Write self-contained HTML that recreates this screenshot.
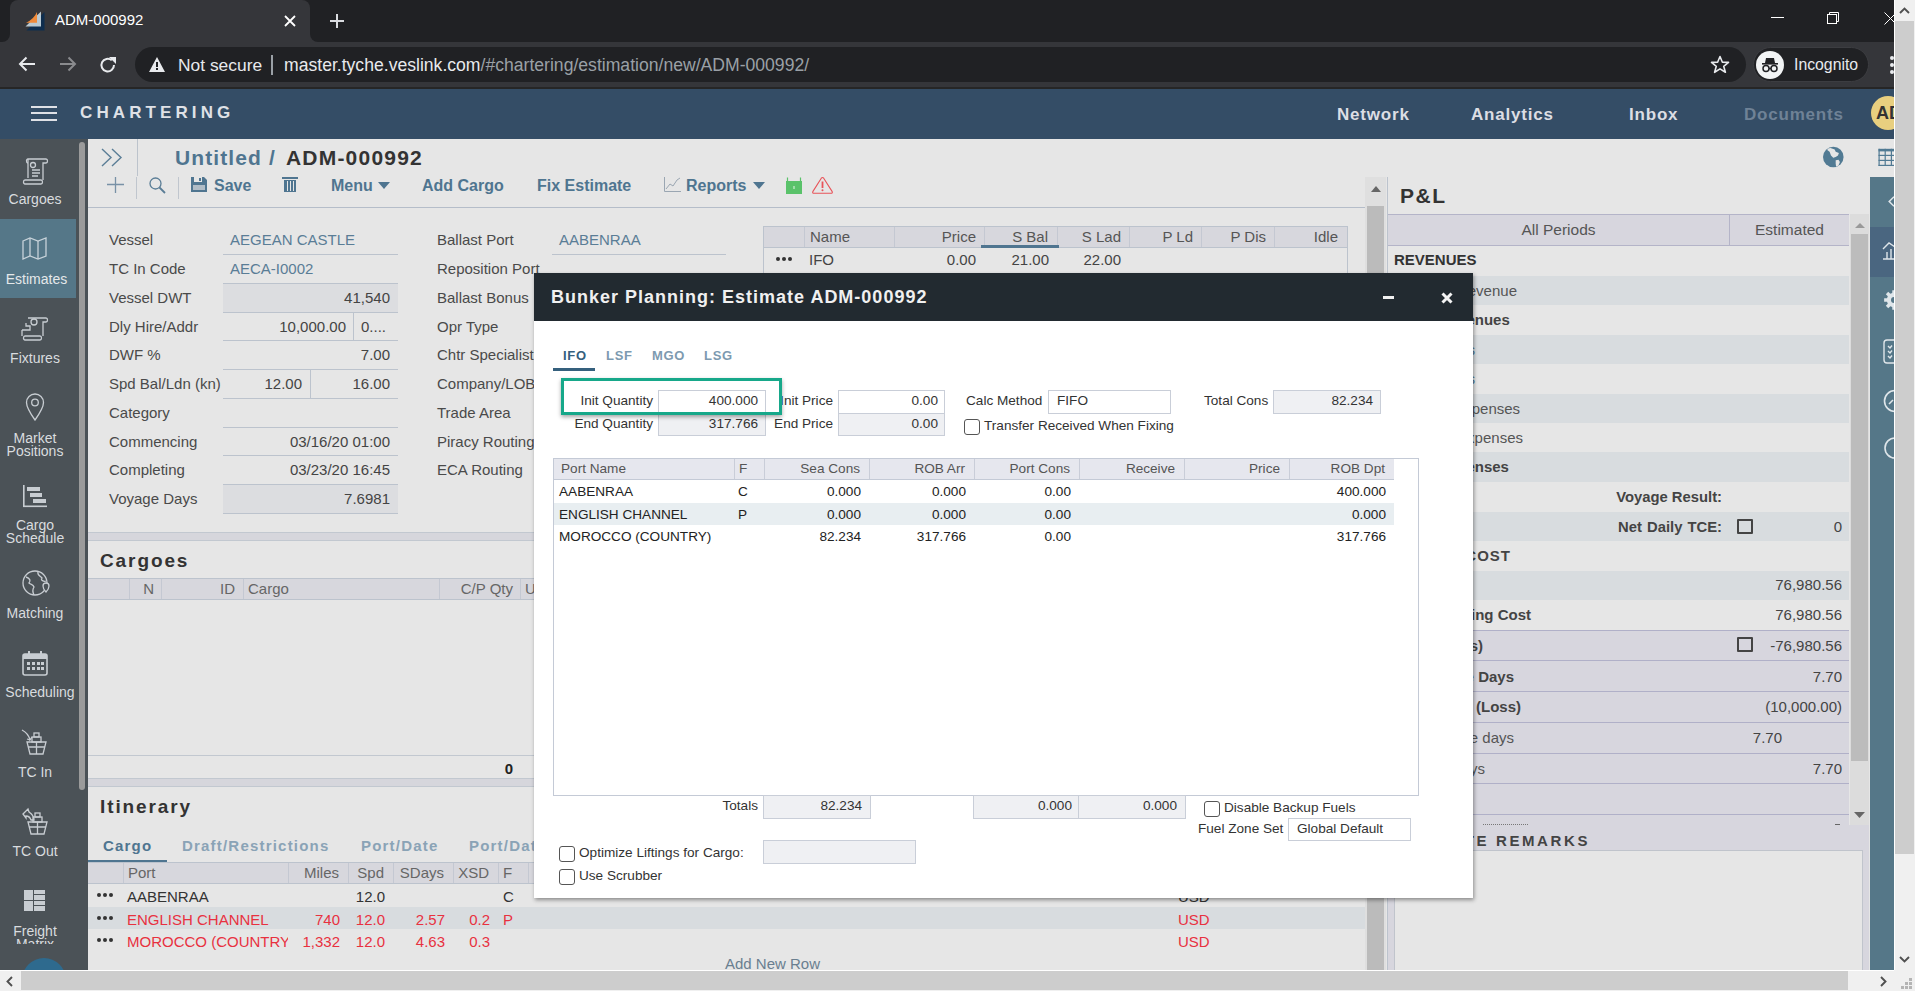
<!DOCTYPE html>
<html><head><meta charset="utf-8"><title>ADM-000992</title>
<style>
*{box-sizing:border-box;margin:0;padding:0}
html,body{width:1915px;height:991px;overflow:hidden}
body{position:relative;background:#e6e6e6;font-family:"Liberation Sans",sans-serif;font-size:15px;color:#444}
.a{position:absolute}
.t{position:absolute;white-space:nowrap;line-height:20px}
.r{text-align:right}
.c{text-align:center}
.b{font-weight:bold}
svg{position:absolute;overflow:visible}
</style></head><body>
<!-- tab strip -->
<div class="a" style="left:0;top:0;width:1894px;height:42px;background:#202124"></div>
<div class="a" style="left:10px;top:0;width:300px;height:42px;background:#35363a;border-radius:8px 8px 0 0"></div>
<div class="a" style="left:2px;top:34px;width:8px;height:8px;background:#35363a"></div>
<div class="a" style="left:0;top:26px;width:10px;height:16px;background:#202124;border-radius:0 0 8px 0"></div>
<div class="a" style="left:310px;top:34px;width:8px;height:8px;background:#35363a"></div>
<div class="a" style="left:310px;top:26px;width:10px;height:16px;background:#202124;border-radius:0 0 0 8px"></div>
<svg style="left:0;top:0" width="50" height="40" viewBox="0 0 50 40">
 <polygon points="44.5,12 44.5,30.5 26.5,30.5" fill="#0f2e4e"/>
 <polygon points="41,11.5 41,26.5 25.5,26.5" fill="#b9c9d2"/>
 <path d="M37,12 Q34,19 26,22.8 L37,22.8 Z" fill="#f08a3a"/>
</svg>
<div class="t" style="left:55px;top:10px;font-size:15px;color:#fff;line-height:20px">ADM-000992</div>
<svg style="left:284px;top:15px" width="12" height="12" viewBox="0 0 12 12"><path d="M1 1L11 11M11 1L1 11" stroke="#fff" stroke-width="1.8"/></svg>
<svg style="left:329px;top:13px" width="16" height="16" viewBox="0 0 16 16"><path d="M8 1V15M1 8H15" stroke="#dadce0" stroke-width="2"/></svg>
<!-- window controls -->
<div class="a" style="left:1771px;top:17px;width:13px;height:1px;background:#fff"></div>
<svg style="left:1826px;top:11px" width="14" height="14" viewBox="0 0 14 14"><path d="M3.5 3.5V1.5H12.5V10.5H10.5" fill="none" stroke="#fff" stroke-width="1"/><rect x="1.5" y="3.5" width="9" height="9" fill="none" stroke="#fff" stroke-width="1"/></svg>
<svg style="left:1884px;top:12px" width="13" height="13" viewBox="0 0 13 13"><path d="M0.5 0.5L12.5 12.5M12.5 0.5L0.5 12.5" stroke="#fff" stroke-width="1"/></svg>
<!-- toolbar -->
<div class="a" style="left:0;top:42px;width:1894px;height:46px;background:#35363a"></div>
<div class="a" style="left:0;top:87px;width:1894px;height:2px;background:#262626"></div>
<svg style="left:18px;top:56px" width="18" height="16" viewBox="0 0 18 16"><path d="M17 8H2M8.5 1.5L2 8L8.5 14.5" fill="none" stroke="#e8eaed" stroke-width="2"/></svg>
<svg style="left:59px;top:56px" width="18" height="16" viewBox="0 0 18 16"><path d="M1 8H16M9.5 1.5L16 8L9.5 14.5" fill="none" stroke="#8a8b8e" stroke-width="2"/></svg>
<svg style="left:99px;top:56px" width="18" height="18" viewBox="0 0 18 18"><path d="M15 9A6.3 6.3 0 1 1 12.8 4.3" fill="none" stroke="#e8eaed" stroke-width="2"/><polygon points="10,1 17,1 17,8" fill="#e8eaed"/></svg>
<div class="a" style="left:135px;top:47px;width:1611px;height:35px;background:#202124;border-radius:17.5px"></div>
<svg style="left:149px;top:57px" width="16" height="15" viewBox="0 0 16 15"><polygon points="8,0 16,15 0,15" fill="#e8eaed"/><rect x="7" y="5" width="2" height="5" fill="#202124"/><rect x="7" y="11" width="2" height="2" fill="#202124"/></svg>
<div class="t" style="left:178px;top:54px;font-size:17.4px;color:#e8eaed;line-height:22px">Not secure</div>
<div class="a" style="left:271px;top:55px;width:2px;height:20px;background:#9aa0a6"></div>
<div class="t" style="left:284px;top:54px;font-size:17.6px;color:#e8eaed;line-height:22px">master.tyche.veslink.com<span style="color:#9aa0a6">/#chartering/estimation/new/ADM-000992/</span></div>
<svg style="left:1710px;top:55px" width="20" height="19" viewBox="0 0 20 19"><polygon points="10,1.5 12.4,7.2 18.5,7.4 13.7,11.3 15.4,17.3 10,13.9 4.6,17.3 6.3,11.3 1.5,7.4 7.6,7.2" fill="none" stroke="#e8eaed" stroke-width="1.6" stroke-linejoin="round"/></svg>
<div class="a" style="left:1753px;top:47px;width:116px;height:35px;background:#202124;border-radius:17.5px;border:1px solid #3c3d41"></div>
<div class="a" style="left:1756px;top:51px;width:28px;height:28px;background:#f1f3f4;border-radius:50%"></div>
<svg style="left:1760px;top:56px" width="20" height="18" viewBox="0 0 20 18"><path d="M6 2L14 2L15 7H5Z" fill="#202124"/><rect x="2" y="7" width="16" height="1.6" fill="#202124"/><circle cx="6" cy="12.5" r="3" fill="none" stroke="#202124" stroke-width="1.5"/><circle cx="14" cy="12.5" r="3" fill="none" stroke="#202124" stroke-width="1.5"/><path d="M9 12.5H11" stroke="#202124" stroke-width="1.5"/></svg>
<div class="t" style="left:1794px;top:54px;font-size:15.8px;color:#e8eaed;line-height:22px">Incognito</div>
<div class="a" style="left:1890px;top:56px;width:4px;height:4px;background:#e8eaed;border-radius:50%"></div>
<div class="a" style="left:1890px;top:63px;width:4px;height:4px;background:#e8eaed;border-radius:50%"></div>
<div class="a" style="left:1890px;top:70px;width:4px;height:4px;background:#e8eaed;border-radius:50%"></div>
<!-- app header -->
<div class="a" style="left:0;top:89px;width:1894px;height:50px;background:#344d66"></div>
<div class="a" style="left:31px;top:106px;width:26px;height:2px;background:#dfe1e6"></div>
<div class="a" style="left:31px;top:112px;width:26px;height:2px;background:#dfe1e6"></div>
<div class="a" style="left:31px;top:119px;width:26px;height:2px;background:#dfe1e6"></div>
<div class="t b" style="left:80px;top:103px;font-size:17px;letter-spacing:4.1px;color:#dfe1e6;line-height:20px">CHARTERING</div>
<div class="t b" style="left:1337px;top:105px;font-size:17px;letter-spacing:0.8px;color:#dcdee4;line-height:20px">Network</div>
<div class="t b" style="left:1471px;top:105px;font-size:17px;letter-spacing:0.8px;color:#dcdee4;line-height:20px">Analytics</div>
<div class="t b" style="left:1629px;top:105px;font-size:17px;letter-spacing:0.8px;color:#dcdee4;line-height:20px">Inbox</div>
<div class="t b" style="left:1744px;top:105px;font-size:17px;letter-spacing:0.8px;color:#6f8296;line-height:20px">Documents</div>
<div class="a" style="left:1871px;top:96px;width:34px;height:34px;background:#e8cf7f;border-radius:50%;overflow:hidden"><div class="t b" style="left:5px;top:7px;font-size:18px;color:#333;line-height:20px">AD</div></div>
<!-- left sidebar -->
<div class="a" style="left:0;top:139px;width:79px;height:831px;background:#4b5257"></div>
<div class="a" style="left:79px;top:139px;width:9px;height:831px;background:#4b5257"></div>
<div class="a" style="left:79px;top:142px;width:6px;height:648px;background:#9b9b9b;border-radius:3px"></div>
<div class="a" style="left:0;top:219px;width:76px;height:79px;background:#557788"></div>
<!-- Cargoes icon: scroll -->
<svg style="left:22px;top:156px" width="28" height="30" viewBox="0 0 28 30" fill="none" stroke="#c8cdd2" stroke-width="1.3">
 <path d="M6 3H24C26 3 26 7 24 7H21V24"/><path d="M6 3V22"/><path d="M6 3C4 3 4 7 6 7"/>
 <path d="M3 24H19C21 24 21 28 19 28H3C1 28 1 24 3 24Z"/><circle cx="11" cy="9" r="2.5"/><path d="M10 14H18M10 17H18M10 20H16"/>
</svg>
<div class="t c" style="left:0;top:189px;width:70px;font-size:14px;color:#d9dcdf">Cargoes</div>
<!-- Estimates icon: map -->
<svg style="left:22px;top:237px" width="26" height="24" viewBox="0 0 26 24" fill="none" stroke="#c8d3da" stroke-width="1.3">
 <path d="M1 4L8 1L16 4L24 1V19L16 22L8 19L1 22Z"/><path d="M8 1V19M16 4V22"/>
</svg>
<div class="t c" style="left:0;top:269px;width:73px;font-size:14px;color:#e4e8ea">Estimates</div>
<!-- Fixtures icon -->
<svg style="left:20px;top:314px" width="30" height="30" viewBox="0 0 30 30" fill="none" stroke="#c8cdd2" stroke-width="1.3">
 <path d="M8 4H26C28 4 28 8 26 8H23V22"/><circle cx="14" cy="8" r="3"/><path d="M2 16H10V12H6V9"/><path d="M5 22H20C22 22 22 26 20 26H5C3 26 3 22 5 22Z"/><path d="M2 16V22"/>
</svg>
<div class="t c" style="left:0;top:348px;width:70px;font-size:14px;color:#d9dcdf">Fixtures</div>
<!-- Market positions: pin -->
<svg style="left:25px;top:393px" width="20" height="28" viewBox="0 0 20 28" fill="none" stroke="#c8cdd2" stroke-width="1.3">
 <path d="M10 27C10 27 1.5 15 1.5 9.5A8.5 8.5 0 0 1 18.5 9.5C18.5 15 10 27 10 27Z"/><circle cx="10" cy="9.5" r="3.3"/>
</svg>
<div class="t c" style="left:0;top:432px;width:70px;font-size:14px;color:#d9dcdf;line-height:13px">Market<br>Positions</div>
<!-- Cargo schedule -->
<svg style="left:22px;top:484px" width="26" height="24" viewBox="0 0 26 24">
 <rect x="1" y="1" width="1.6" height="22" fill="#c8cdd2"/><rect x="1" y="21.5" width="24" height="1.6" fill="#c8cdd2"/>
 <rect x="5" y="3" width="13" height="4" fill="#c8cdd2"/><rect x="8" y="9" width="12" height="4" fill="#c8cdd2"/><rect x="11" y="15" width="13" height="4" fill="#c8cdd2"/>
</svg>
<div class="t c" style="left:0;top:519px;width:70px;font-size:14px;color:#d9dcdf;line-height:13px">Cargo<br>Schedule</div>
<!-- Matching globe -->
<svg style="left:22px;top:570px" width="28" height="28" viewBox="0 0 28 28" fill="none" stroke="#c8cdd2" stroke-width="1.3">
 <circle cx="13" cy="13" r="12"/><path d="M4 7C8 8 9 11 7 13C9 15 11 14 12 17C10 20 11 23 12 25"/><path d="M16 2C15 5 18 6 20 8C18 10 22 12 24 11"/><path d="M21 16A3 3 0 0 1 27 16C27 19 24 22 24 22C24 22 21 19 21 16Z" fill="#4b5257"/>
</svg>
<div class="t c" style="left:0;top:603px;width:70px;font-size:14px;color:#d9dcdf">Matching</div>
<!-- Scheduling calendar -->
<svg style="left:22px;top:650px" width="26" height="26" viewBox="0 0 26 26">
 <rect x="1" y="4" width="24" height="21" rx="2" fill="none" stroke="#c8cdd2" stroke-width="1.6"/><rect x="1" y="4" width="24" height="5" fill="#c8cdd2"/><rect x="6" y="1" width="2" height="5" fill="#c8cdd2"/><rect x="18" y="1" width="2" height="5" fill="#c8cdd2"/>
 <g fill="#c8cdd2"><rect x="5" y="12" width="3" height="3"/><rect x="10" y="12" width="3" height="3"/><rect x="15" y="12" width="3" height="3"/><rect x="19" y="12" width="3" height="3"/><rect x="5" y="17" width="3" height="3"/><rect x="10" y="17" width="3" height="3"/><rect x="15" y="17" width="3" height="3"/><rect x="19" y="17" width="3" height="3"/></g>
</svg>
<div class="t c" style="left:0;top:682px;width:80px;font-size:14px;color:#d9dcdf">Scheduling</div>
<!-- TC In -->
<svg style="left:20px;top:728px" width="28" height="28" viewBox="0 0 28 28" fill="none" stroke="#c8cdd2" stroke-width="1.3">
 <path d="M2 2C6 4 9 8 10 12L12 9"/><path d="M10 12L7 11"/><rect x="14" y="5" width="5" height="4"/><rect x="12" y="9" width="9" height="5"/><path d="M7 14H26L23 26H10Z"/><path d="M16.5 14V26M8 19H25"/>
</svg>
<div class="t c" style="left:0;top:762px;width:70px;font-size:14px;color:#d9dcdf">TC In</div>
<!-- TC Out -->
<svg style="left:20px;top:808px" width="28" height="28" viewBox="0 0 28 28" fill="none" stroke="#c8cdd2" stroke-width="1.3">
 <path d="M3 6L8 1L9 4C12 6 14 8 14 12L11 12C10 9 8 8 6 8L6 10Z"/><rect x="15" y="5" width="5" height="4"/><rect x="13" y="9" width="9" height="5"/><path d="M8 14H27L24 26H11Z"/><path d="M17.5 14V26M9 19H26"/>
</svg>
<div class="t c" style="left:0;top:841px;width:70px;font-size:14px;color:#d9dcdf">TC Out</div>
<!-- Freight matrix -->
<svg style="left:24px;top:890px" width="22" height="22" viewBox="0 0 22 22" fill="#c8cdd2">
 <rect x="0" y="0" width="9" height="10"/><rect x="0" y="11" width="9" height="10"/><rect x="10" y="0" width="11" height="4"/><rect x="10" y="5" width="11" height="5"/><rect x="10" y="11" width="11" height="4"/><rect x="10" y="16" width="11" height="5"/>
</svg>
<div class="a" style="left:0;top:918px;width:79px;height:26px;overflow:hidden"><div class="t c" style="left:0;top:7px;width:70px;font-size:14px;color:#d9dcdf;line-height:13px">Freight<br>Matrix</div></div>
<div class="a" style="left:22px;top:958px;width:44px;height:12px;overflow:hidden"><div class="a" style="left:0;top:0;width:44px;height:44px;background:#2e6a8e;border-radius:50%"></div></div>
<!-- main header -->
<div class="a" style="left:137px;top:139px;width:1px;height:37px;background:#bcc3cc"></div>
<svg style="left:101px;top:148px" width="22" height="19" viewBox="0 0 22 19" fill="none" stroke="#5a7d96" stroke-width="1.4"><path d="M1 1L10 9.5L1 18M11 1L20 9.5L11 18"/></svg>
<div class="t b" style="left:175px;top:146px;font-size:21px;line-height:24px;letter-spacing:1.1px;color:#4f7590">Untitled /</div>
<div class="t b" style="left:286px;top:146px;font-size:21px;line-height:24px;letter-spacing:1.2px;color:#333">ADM-000992</div>
<svg style="left:107px;top:177px" width="17" height="16" viewBox="0 0 17 16"><path d="M8.5 0V16M0 7.5H17" stroke="#7891a6" stroke-width="1.3"/></svg>
<div class="a" style="left:136px;top:177px;width:1px;height:22px;background:#c0c6ce"></div>
<svg style="left:149px;top:177px" width="17" height="17" viewBox="0 0 17 17" fill="none" stroke="#5a7d96" stroke-width="1.3"><circle cx="6.5" cy="6.5" r="5.5"/><path d="M10.5 10.5L16 16" stroke-width="1.8"/></svg>
<div class="a" style="left:178px;top:177px;width:1px;height:22px;background:#c0c6ce"></div>
<svg style="left:191px;top:177px" width="16" height="15" viewBox="0 0 16 15"><path d="M0 0H13L16 3V15H0Z" fill="#4f7590"/><rect x="3" y="0" width="8" height="5" fill="#e6e6e6"/><rect x="8" y="1" width="2" height="3" fill="#4f7590"/><rect x="2" y="8" width="12" height="5" fill="#b0bcc6"/></svg>
<div class="t b" style="left:214px;top:176px;font-size:16px;color:#4f7590">Save</div>
<svg style="left:282px;top:177px" width="16" height="15" viewBox="0 0 16 15" fill="#4f7590"><rect x="0" y="0" width="16" height="2"/><rect x="2" y="3" width="12" height="12"/><g fill="#e6e6e6"><rect x="5" y="4" width="1" height="10"/><rect x="8" y="4" width="1" height="10"/><rect x="11" y="4" width="1" height="10"/></g></svg>
<div class="t b" style="left:331px;top:176px;font-size:16px;color:#4f7590">Menu</div>
<svg style="left:378px;top:182px" width="12" height="7" viewBox="0 0 12 7"><polygon points="0,0 12,0 6,7" fill="#4f7590"/></svg>
<div class="t b" style="left:422px;top:176px;font-size:16px;color:#4f7590">Add Cargo</div>
<div class="t b" style="left:537px;top:176px;font-size:16px;color:#4f7590">Fix Estimate</div>
<svg style="left:664px;top:177px" width="17" height="15" viewBox="0 0 17 15" fill="none" stroke="#9aa6b2" stroke-width="1"><path d="M0.5 0V14.5H17"/><path d="M2 12L6 7L9 9L13 3L16 1"/></svg>
<div class="t b" style="left:686px;top:176px;font-size:16px;color:#4f7590">Reports</div>
<svg style="left:753px;top:182px" width="12" height="7" viewBox="0 0 12 7"><polygon points="0,0 12,0 6,7" fill="#4f7590"/></svg>
<svg style="left:786px;top:177px" width="16" height="17" viewBox="0 0 16 17"><rect x="0" y="4" width="16" height="13" fill="#5ac26a"/><path d="M1.5 4V0.5M14.5 4V0.5" stroke="#5ac26a" stroke-width="1.2"/><rect x="7.5" y="9" width="1" height="3" fill="#e6f5e8"/></svg>
<svg style="left:812px;top:177px" width="21" height="17" viewBox="0 0 21 17" fill="none" stroke="#e8545a" stroke-width="1.1"><path d="M9.3 1.2Q10.5 -0.3 11.7 1.2L20.2 14.6Q20.8 16.2 19 16.2H2Q0.2 16.2 0.8 14.6Z" stroke-linejoin="round"/><path d="M10.5 4.5V11" stroke-width="1.8"/><circle cx="10.5" cy="13.3" r="1" fill="#e8545a" stroke="none"/></svg>
<div class="a" style="left:88px;top:207px;width:1277px;height:1px;background:#b5bdc9"></div>

<!-- form left column -->
<div class="t" style="left:109px;top:230px;font-size:15px;color:#4a4a4a;line-height:20px">Vessel</div>
<div class="t" style="left:109px;top:259px;font-size:15px;color:#4a4a4a">TC In Code</div>
<div class="t" style="left:109px;top:288px;font-size:15px;color:#4a4a4a">Vessel DWT</div>
<div class="t" style="left:109px;top:317px;font-size:15px;color:#4a4a4a">Dly Hire/Addr</div>
<div class="t" style="left:109px;top:345px;font-size:15px;color:#4a4a4a">DWF %</div>
<div class="t" style="left:109px;top:374px;font-size:15px;color:#4a4a4a">Spd Bal/Ldn (kn)</div>
<div class="t" style="left:109px;top:403px;font-size:15px;color:#4a4a4a">Category</div>
<div class="t" style="left:109px;top:432px;font-size:15px;color:#4a4a4a">Commencing</div>
<div class="t" style="left:109px;top:460px;font-size:15px;color:#4a4a4a">Completing</div>
<div class="t" style="left:109px;top:489px;font-size:15px;color:#4a4a4a">Voyage Days</div>
<!-- fields -->
<div class="a" style="left:223px;top:283px;width:175px;height:29px;background:#dcdde0"></div>
<div class="a" style="left:223px;top:484px;width:175px;height:29px;background:#dcdde0"></div>
<div class="a" style="left:223px;top:254px;width:175px;height:1px;background:#bcc3cd"></div>
<div class="a" style="left:223px;top:283px;width:175px;height:1px;background:#bcc3cd"></div>
<div class="a" style="left:223px;top:312px;width:175px;height:1px;background:#bcc3cd"></div>
<div class="a" style="left:223px;top:340px;width:175px;height:1px;background:#bcc3cd"></div>
<div class="a" style="left:223px;top:369px;width:175px;height:1px;background:#bcc3cd"></div>
<div class="a" style="left:223px;top:398px;width:175px;height:1px;background:#bcc3cd"></div>
<div class="a" style="left:223px;top:427px;width:175px;height:1px;background:#bcc3cd"></div>
<div class="a" style="left:223px;top:455px;width:175px;height:1px;background:#bcc3cd"></div>
<div class="a" style="left:223px;top:484px;width:175px;height:1px;background:#bcc3cd"></div>
<div class="a" style="left:223px;top:513px;width:175px;height:1px;background:#bcc3cd"></div>
<div class="a" style="left:353px;top:312px;width:1px;height:28px;background:#bcc3cd"></div>
<div class="a" style="left:310px;top:369px;width:1px;height:29px;background:#bcc3cd"></div>
<div class="t" style="left:230px;top:230px;font-size:15px;color:#5a7d96">AEGEAN CASTLE</div>
<div class="t" style="left:230px;top:259px;font-size:15px;color:#5a7d96">AECA-I0002</div>
<div class="t r" style="left:223px;top:288px;width:167px;font-size:15px;color:#444">41,540</div>
<div class="t r" style="left:223px;top:317px;width:123px;font-size:15px;color:#444">10,000.00</div>
<div class="t" style="left:361px;top:317px;font-size:15px;color:#444">0....</div>
<div class="t r" style="left:223px;top:345px;width:167px;font-size:15px;color:#444">7.00</div>
<div class="t r" style="left:223px;top:374px;width:79px;font-size:15px;color:#444">12.00</div>
<div class="t r" style="left:310px;top:374px;width:80px;font-size:15px;color:#444">16.00</div>
<div class="t r" style="left:223px;top:432px;width:167px;font-size:15px;color:#444">03/16/20 01:00</div>
<div class="t r" style="left:223px;top:460px;width:167px;font-size:15px;color:#444">03/23/20 16:45</div>
<div class="t r" style="left:223px;top:489px;width:167px;font-size:15px;color:#444">7.6981</div>
<!-- form second column -->
<div class="t" style="left:437px;top:230px;font-size:15px;color:#4a4a4a">Ballast Port</div>
<div class="t" style="left:437px;top:259px;font-size:15px;color:#4a4a4a">Reposition Port</div>
<div class="t" style="left:437px;top:288px;font-size:15px;color:#4a4a4a">Ballast Bonus</div>
<div class="t" style="left:437px;top:317px;font-size:15px;color:#4a4a4a">Opr Type</div>
<div class="t" style="left:437px;top:345px;font-size:15px;color:#4a4a4a">Chtr Specialist</div>
<div class="t" style="left:437px;top:374px;font-size:15px;color:#4a4a4a">Company/LOB</div>
<div class="t" style="left:437px;top:403px;font-size:15px;color:#4a4a4a">Trade Area</div>
<div class="t" style="left:437px;top:432px;font-size:15px;color:#4a4a4a">Piracy Routing</div>
<div class="t" style="left:437px;top:460px;font-size:15px;color:#4a4a4a">ECA Routing</div>
<div class="a" style="left:552px;top:254px;width:174px;height:1px;background:#bcc3cd"></div>
<div class="t" style="left:559px;top:230px;font-size:15px;color:#5a7d96">AABENRAA</div>

<!-- top right table -->
<div class="a" style="left:763px;top:226px;width:585px;height:60px;border:1px solid #bcc3cd;border-bottom:none"></div>
<div class="a" style="left:764px;top:227px;width:583px;height:21px;background:#d7d7dd;border-bottom:1px solid #bcc3cd"></div>
<div class="a" style="left:804px;top:227px;width:1px;height:20px;background:#c4c8d2"></div>
<div class="a" style="left:894px;top:227px;width:1px;height:20px;background:#c4c8d2"></div>
<div class="a" style="left:984px;top:227px;width:1px;height:20px;background:#c4c8d2"></div>
<div class="a" style="left:1057px;top:227px;width:1px;height:20px;background:#c4c8d2"></div>
<div class="a" style="left:1129px;top:227px;width:1px;height:20px;background:#c4c8d2"></div>
<div class="a" style="left:1201px;top:227px;width:1px;height:20px;background:#c4c8d2"></div>
<div class="a" style="left:1274px;top:227px;width:1px;height:20px;background:#c4c8d2"></div>
<div class="a" style="left:981px;top:245px;width:78px;height:3px;background:#4f7590"></div>
<div class="t" style="left:810px;top:227px;font-size:15px;color:#555">Name</div>
<div class="t r" style="left:894px;top:227px;width:82px;font-size:15px;color:#555">Price</div>
<div class="t r" style="left:984px;top:227px;width:64px;font-size:15px;color:#555">S Bal</div>
<div class="t r" style="left:1057px;top:227px;width:64px;font-size:15px;color:#555">S Lad</div>
<div class="t r" style="left:1129px;top:227px;width:64px;font-size:15px;color:#555">P Ld</div>
<div class="t r" style="left:1201px;top:227px;width:65px;font-size:15px;color:#555">P Dis</div>
<div class="t r" style="left:1274px;top:227px;width:64px;font-size:15px;color:#555">Idle</div>
<div class="a" style="left:776px;top:257px;width:4px;height:4px;border-radius:50%;background:#333;box-shadow:6px 0 0 #333,12px 0 0 #333"></div>
<div class="t" style="left:809px;top:250px;font-size:15px;color:#444">IFO</div>
<div class="t r" style="left:894px;top:250px;width:82px;font-size:15px;color:#444">0.00</div>
<div class="t r" style="left:984px;top:250px;width:65px;font-size:15px;color:#444">21.00</div>
<div class="t r" style="left:1057px;top:250px;width:64px;font-size:15px;color:#444">22.00</div>
<!-- band between form and cargoes -->
<div class="a" style="left:88px;top:532px;width:1277px;height:9px;background:#d6d6dc;border-top:1px solid #c2c8d0;border-bottom:1px solid #c2c8d0"></div>
<div class="t b" style="left:100px;top:549px;font-size:19px;line-height:24px;letter-spacing:1.9px;color:#333">Cargoes</div>
<div class="a" style="left:88px;top:578px;width:1277px;height:22px;background:#d7d7dd;border-top:1px solid #bcc3cd;border-bottom:1px solid #bcc3cd"></div>
<div class="a" style="left:129px;top:579px;width:1px;height:20px;background:#c4c8d2"></div>
<div class="a" style="left:161px;top:579px;width:1px;height:20px;background:#c4c8d2"></div>
<div class="a" style="left:243px;top:579px;width:1px;height:20px;background:#c4c8d2"></div>
<div class="a" style="left:439px;top:579px;width:1px;height:20px;background:#c4c8d2"></div>
<div class="a" style="left:520px;top:579px;width:1px;height:20px;background:#c4c8d2"></div>
<div class="t r" style="left:129px;top:579px;width:25px;font-size:15px;color:#666">N</div>
<div class="t r" style="left:161px;top:579px;width:74px;font-size:15px;color:#666">ID</div>
<div class="t" style="left:248px;top:579px;font-size:15px;color:#666">Cargo</div>
<div class="t r" style="left:439px;top:579px;width:74px;font-size:15px;color:#666">C/P Qty</div>
<div class="t" style="left:525px;top:579px;font-size:15px;color:#666">U</div>
<div class="a" style="left:88px;top:755px;width:1277px;height:1px;background:#c2c8d0"></div>
<div class="t b" style="left:480px;top:759px;width:33px;font-size:15px;color:#222;text-align:right">0</div>
<div class="a" style="left:88px;top:778px;width:1277px;height:9px;background:#d6d6dc;border-top:1px solid #c2c8d0;border-bottom:1px solid #c2c8d0"></div>
<div class="t b" style="left:100px;top:795px;font-size:19px;line-height:24px;letter-spacing:1.9px;color:#333">Itinerary</div>
<!-- itinerary tabs -->
<div class="t b" style="left:103px;top:836px;font-size:15px;letter-spacing:1.2px;color:#4f7590">Cargo</div>
<div class="t b" style="left:182px;top:836px;font-size:15px;letter-spacing:1.2px;color:#8aa3b6">Draft/Restrictions</div>
<div class="t b" style="left:361px;top:836px;font-size:15px;letter-spacing:1.2px;color:#8aa3b6">Port/Date</div>
<div class="t b" style="left:469px;top:836px;font-size:15px;letter-spacing:1.2px;color:#8aa3b6">Port/Date</div>
<div class="a" style="left:88px;top:860px;width:79px;height:3px;background:#4f7590"></div>
<div class="a" style="left:88px;top:862px;width:1277px;height:22px;background:#d7d7dd;border-top:1px solid #bcc3cd;border-bottom:1px solid #bcc3cd"></div>
<div class="a" style="left:123px;top:863px;width:1px;height:20px;background:#c4c8d2"></div>
<div class="a" style="left:288px;top:863px;width:1px;height:20px;background:#c4c8d2"></div>
<div class="a" style="left:348px;top:863px;width:1px;height:20px;background:#c4c8d2"></div>
<div class="a" style="left:393px;top:863px;width:1px;height:20px;background:#c4c8d2"></div>
<div class="a" style="left:453px;top:863px;width:1px;height:20px;background:#c4c8d2"></div>
<div class="a" style="left:498px;top:863px;width:1px;height:20px;background:#c4c8d2"></div>
<div class="a" style="left:528px;top:863px;width:1px;height:20px;background:#c4c8d2"></div>
<div class="t" style="left:128px;top:863px;font-size:15px;color:#666">Port</div>
<div class="t r" style="left:288px;top:863px;width:51px;font-size:15px;color:#666">Miles</div>
<div class="t r" style="left:348px;top:863px;width:36px;font-size:15px;color:#666">Spd</div>
<div class="t r" style="left:393px;top:863px;width:51px;font-size:15px;color:#666">SDays</div>
<div class="t r" style="left:453px;top:863px;width:36px;font-size:15px;color:#666">XSD</div>
<div class="t" style="left:503px;top:863px;font-size:15px;color:#666">F</div>
<div class="a" style="left:88px;top:907px;width:1277px;height:22px;background:#d8dcdf"></div>
<div class="a" style="left:97px;top:893px;width:4px;height:4px;border-radius:50%;background:#333;box-shadow:6px 0 0 #333,12px 0 0 #333"></div>
<div class="a" style="left:97px;top:916px;width:4px;height:4px;border-radius:50%;background:#333;box-shadow:6px 0 0 #333,12px 0 0 #333"></div>
<div class="a" style="left:97px;top:938px;width:4px;height:4px;border-radius:50%;background:#333;box-shadow:6px 0 0 #333,12px 0 0 #333"></div>
<div class="t" style="left:127px;top:887px;font-size:15px;color:#333">AABENRAA</div>
<div class="t r" style="left:348px;top:887px;width:37px;font-size:15px;color:#333">12.0</div>
<div class="t" style="left:503px;top:887px;font-size:15px;color:#333">C</div>
<div class="t" style="left:1178px;top:887px;font-size:15px;color:#333">USD</div>
<div class="t" style="left:127px;top:910px;font-size:15px;color:#e8313f">ENGLISH CHANNEL</div>
<div class="t r" style="left:288px;top:910px;width:52px;font-size:15px;color:#e8313f">740</div>
<div class="t r" style="left:348px;top:910px;width:37px;font-size:15px;color:#e8313f">12.0</div>
<div class="t r" style="left:393px;top:910px;width:52px;font-size:15px;color:#e8313f">2.57</div>
<div class="t r" style="left:453px;top:910px;width:37px;font-size:15px;color:#e8313f">0.2</div>
<div class="t" style="left:503px;top:910px;font-size:15px;color:#e8313f">P</div>
<div class="t" style="left:1178px;top:910px;font-size:15px;color:#e8313f">USD</div>
<div class="a" style="left:127px;top:932px;width:161px;height:20px;overflow:hidden"><div class="t" style="left:0;top:0;font-size:15px;color:#e8313f">MOROCCO (COUNTRY)</div></div>
<div class="t r" style="left:288px;top:932px;width:52px;font-size:15px;color:#e8313f">1,332</div>
<div class="t r" style="left:348px;top:932px;width:37px;font-size:15px;color:#e8313f">12.0</div>
<div class="t r" style="left:393px;top:932px;width:52px;font-size:15px;color:#e8313f">4.63</div>
<div class="t r" style="left:453px;top:932px;width:37px;font-size:15px;color:#e8313f">0.3</div>
<div class="t" style="left:1178px;top:932px;font-size:15px;color:#e8313f">USD</div>
<div class="t" style="left:725px;top:954px;font-size:15px;color:#6a7f90">Add New Row</div>
<!-- main vertical scrollbar -->
<div class="a" style="left:1365px;top:177px;width:21px;height:793px;background:#dfdfdf"></div>
<div class="a" style="left:1367px;top:206px;width:17px;height:764px;background:#bbbbbb"></div>
<svg style="left:1371px;top:186px" width="10" height="6" viewBox="0 0 10 6"><polygon points="5,0 10,6 0,6" fill="#666"/></svg>
<div class="a" style="left:1387px;top:177px;width:1px;height:793px;background:#bcc3cd"></div>
<!-- top right icons -->
<svg style="left:1815px;top:140px" width="40" height="35" viewBox="0 0 40 35"><circle cx="18.3" cy="17" r="10.3" fill="#517a93"/>
<polygon points="13.1,8.5 15.5,8 19.7,9.4 20.7,11.7 23.9,13.1 23,15.5 20.7,16.9 18.3,17.8 19.7,19.2 16,15.5 14.6,11.7 12.2,9.9" fill="#e6e6e6"/>
<polygon points="20.7,20.2 23.5,19.7 24.9,22.1 23.5,25.4 21.1,26.8 20.7,23.5" fill="#e6e6e6"/></svg>
<svg style="left:1870px;top:140px" width="30" height="35" viewBox="0 0 30 35" fill="#517a93"><rect x="8.5" y="8.8" width="16" height="2.6"/><rect x="8.5" y="14.8" width="16" height="1.2"/><rect x="8.5" y="19.8" width="16" height="1.2"/><rect x="8.5" y="24.8" width="16" height="1.2"/><rect x="8.5" y="8.8" width="1.2" height="17.2"/><rect x="14.6" y="8.8" width="1.2" height="17.2"/><rect x="20.8" y="8.8" width="1.2" height="17.2"/></svg>
<!-- P&L -->
<div class="t b" style="left:1400px;top:184px;font-size:21px;line-height:24px;letter-spacing:1.5px;color:#333">P&amp;L</div>
<div class="a" style="left:1388px;top:214px;width:461px;height:32px;background:#d7d6de;border-top:1px solid #b4b4c8;border-bottom:1px solid #b4b4c8"></div>
<div class="a" style="left:1729px;top:215px;width:1px;height:30px;background:#b4b4c8"></div>
<div class="t c" style="left:1388px;top:220px;width:341px;font-size:15.5px;color:#555">All Periods</div>
<div class="t c" style="left:1730px;top:220px;width:119px;font-size:15.5px;color:#555">Estimated</div>
<div class="t b" style="left:1394px;top:250px;font-size:15px;color:#333">REVENUES</div>
<div class="a" style="left:1388px;top:276px;width:461px;height:29px;background:#d8dcdf"></div>
<div class="a" style="left:1388px;top:335px;width:461px;height:29px;background:#d8dcdf"></div>
<div class="a" style="left:1388px;top:394px;width:461px;height:29px;background:#d8dcdf"></div>
<div class="a" style="left:1388px;top:452px;width:461px;height:30px;background:#d8dcdf"></div>
<div class="a" style="left:1388px;top:512px;width:461px;height:29px;background:#d8dcdf"></div>
<div class="a" style="left:1388px;top:571px;width:461px;height:29px;background:#d8dcdf"></div>
<div class="t r" style="left:1400px;top:281px;width:117px;font-size:15px;color:#555">Freight Revenue</div>
<div class="t r b" style="left:1400px;top:310px;width:103px;font-size:15px;color:#444">Total Revenues</div>
<div class="t r" style="left:1400px;top:340px;width:75px;font-size:15px;color:#4f7590">Costs</div>
<div class="t r" style="left:1400px;top:369px;width:75px;font-size:15px;color:#4f7590">Costs</div>
<div class="t r" style="left:1400px;top:399px;width:116px;font-size:15px;color:#555">Voyage Expenses</div>
<div class="t r" style="left:1400px;top:428px;width:123px;font-size:15px;color:#555">Other Expenses</div>
<div class="t r b" style="left:1400px;top:457px;width:102px;font-size:15px;color:#444">Total Expenses</div>
<div class="t r b" style="left:1500px;top:487px;width:222px;font-size:14.8px;color:#444">Voyage Result:</div>
<div class="t r b" style="left:1500px;top:517px;width:222px;font-size:14.8px;color:#444;word-spacing:1px">Net Daily TCE:</div>
<div class="a" style="left:1737px;top:519px;width:16px;height:15px;border:2px solid #444;border-radius:1px"></div>
<div class="t r" style="left:1700px;top:517px;width:142px;font-size:15px;color:#444">0</div>
<div class="t r b" style="left:1300px;top:546px;width:211px;font-size:15px;letter-spacing:1px;color:#444">VOYAGE COST</div>
<div class="t r" style="left:1700px;top:575px;width:142px;font-size:15px;color:#444">76,980.56</div>
<div class="t r b" style="left:1300px;top:605px;width:231px;font-size:15px;color:#444">Total Operating Cost</div>
<div class="t r" style="left:1700px;top:605px;width:142px;font-size:15px;color:#444">76,980.56</div>
<!-- lower purple-grey rows -->
<div class="a" style="left:1388px;top:630px;width:461px;height:195px;background:#d7d6de"></div>
<div class="a" style="left:1388px;top:630px;width:461px;height:1px;background:#b0b0c8"></div>
<div class="a" style="left:1388px;top:660px;width:461px;height:1px;background:#b0b0c8"></div>
<div class="a" style="left:1388px;top:691px;width:461px;height:1px;background:#b0b0c8"></div>
<div class="a" style="left:1388px;top:722px;width:461px;height:1px;background:#b0b0c8"></div>
<div class="a" style="left:1388px;top:753px;width:461px;height:1px;background:#b0b0c8"></div>
<div class="a" style="left:1388px;top:783px;width:461px;height:1px;background:#b0b0c8"></div>
<div class="a" style="left:1388px;top:814px;width:461px;height:1px;background:#b0b0c8"></div>
<div class="t r b" style="left:1394px;top:636px;width:89px;font-size:15px;color:#444">Profit (Loss)</div>
<div class="a" style="left:1737px;top:637px;width:16px;height:15px;border:2px solid #444;border-radius:1px"></div>
<div class="t r" style="left:1700px;top:636px;width:142px;font-size:15px;color:#444">-76,980.56</div>
<div class="t r b" style="left:1394px;top:667px;width:120px;font-size:15px;color:#444">Voyage Days</div>
<div class="t r" style="left:1700px;top:667px;width:142px;font-size:15px;color:#444">7.70</div>
<div class="t r b" style="left:1394px;top:697px;width:127px;font-size:15px;color:#444">Profit (Loss)</div>
<div class="t r" style="left:1700px;top:697px;width:142px;font-size:15px;color:#444">(10,000.00)</div>
<div class="t r" style="left:1394px;top:728px;width:120px;font-size:15px;color:#555">Voyage days</div>
<div class="t r" style="left:1700px;top:728px;width:82px;font-size:15px;color:#444">7.70</div>
<div class="t r" style="left:1394px;top:759px;width:91px;font-size:15px;color:#555">Days</div>
<div class="t r" style="left:1700px;top:759px;width:142px;font-size:15px;color:#444">7.70</div>
<div class="a" style="left:1835px;top:824px;width:5px;height:1px;background:#666"></div><div class="a" style="left:1483px;top:824px;width:45px;height:1px;border-top:1px dotted #777"></div>
<div class="a" style="left:1388px;top:825px;width:481px;height:145px;background:#d7d6de"></div>
<div class="t r b" style="left:1300px;top:831px;width:290px;font-size:15px;letter-spacing:2.6px;color:#444">ESTIMATE REMARKS</div>
<div class="a" style="left:1394px;top:850px;width:469px;height:120px;background:#e6e6e6;border:1px solid #c0c4cc;border-bottom:none"></div>
<!-- P&L scrollbar -->
<div class="a" style="left:1850px;top:214px;width:19px;height:611px;background:#dcdcdc"></div>
<div class="a" style="left:1851px;top:234px;width:17px;height:527px;background:#bcbcbc"></div>
<svg style="left:1855px;top:223px" width="10" height="5" viewBox="0 0 10 5"><polygon points="5,0 10,5 0,5" fill="#999"/></svg>
<svg style="left:1854px;top:812px" width="11" height="6" viewBox="0 0 11 6"><polygon points="0,0 11,0 5.5,6" fill="#666"/></svg>
<!-- right strip -->
<div class="a" style="left:1870px;top:177px;width:24px;height:793px;background:#557788"></div>
<div class="a" style="left:1870px;top:227px;width:24px;height:50px;background:#4a6680"></div>
<svg style="left:1888px;top:196px" width="7" height="11" viewBox="0 0 7 11"><path d="M6 0.8L1.2 5.5L6 10.2" fill="none" stroke="#dfe6ea" stroke-width="1.5"/></svg>
<svg style="left:1883px;top:241px" width="12" height="19" viewBox="0 0 12 19" fill="none" stroke="#dfe6ea" stroke-width="1.4"><path d="M0 18H12M4 18V11M8 18V8M0 8L6 2L12 6"/></svg>
<svg style="left:1883px;top:290px" width="11" height="21" viewBox="0 0 11 21"><polygon points="17.98,8.22 20.86,8.31 20.86,11.69 17.98,11.78 17.19,13.67 19.17,15.77 16.77,18.17 14.67,16.19 12.78,16.98 12.69,19.86 9.31,19.86 9.22,16.98 7.33,16.19 5.23,18.17 2.83,15.77 4.81,13.67 4.02,11.78 1.14,11.69 1.14,8.31 4.02,8.22 4.81,6.33 2.83,4.23 5.23,1.83 7.33,3.81 9.22,3.02 9.31,0.14 12.69,0.14 12.78,3.02 14.67,3.81 16.77,1.83 19.17,4.23 17.19,6.33" fill="#dfe6ea"/><circle cx="11" cy="10" r="3" fill="#557788"/></svg>
<svg style="left:1883px;top:339px" width="11" height="25" viewBox="0 0 11 25" fill="none" stroke="#dfe6ea" stroke-width="1.4"><rect x="1" y="1" width="20" height="23" rx="3"/><path d="M5 7L7 9L9 6.5M5 12L7 14L9 11.5M5 17L7 19L9 16.5"/></svg>
<svg style="left:1883px;top:389px" width="11" height="24" viewBox="0 0 11 24" fill="none" stroke="#dfe6ea" stroke-width="1.6"><circle cx="12" cy="12" r="10.5"/><path d="M6 15L10 11"/></svg>
<svg style="left:1883px;top:437px" width="11" height="22" viewBox="0 0 11 22" fill="none" stroke="#dfe6ea" stroke-width="1.6"><circle cx="12" cy="11" r="10"/></svg>
<!-- modal -->
<div class="a" style="left:534px;top:273px;width:939px;height:625px;background:#fff;box-shadow:1px 2px 4px rgba(0,0,0,0.4)"></div>
<div class="a" style="left:534px;top:273px;width:939px;height:48px;background:#222a30"></div>
<div class="t b" style="left:551px;top:286px;font-size:18px;line-height:22px;letter-spacing:1px;color:#f0f0f0">Bunker Planning: Estimate ADM-000992</div>
<div class="a" style="left:1383px;top:296px;width:11px;height:3px;background:#f0f0f0"></div>
<svg style="left:1441px;top:292px" width="12" height="12" viewBox="0 0 12 12"><path d="M1.5 1.5L10.5 10.5M10.5 1.5L1.5 10.5" stroke="#f4f4f4" stroke-width="3"/></svg>
<!-- tabs -->
<div class="t b" style="left:563px;top:346px;font-size:13px;letter-spacing:0.7px;color:#35607d">IFO</div>
<div class="t b" style="left:606px;top:346px;font-size:13px;letter-spacing:0.7px;color:#7d9ab0">LSF</div>
<div class="t b" style="left:652px;top:346px;font-size:13px;letter-spacing:0.7px;color:#7d9ab0">MGO</div>
<div class="t b" style="left:704px;top:346px;font-size:13px;letter-spacing:0.7px;color:#7d9ab0">LSG</div>
<div class="a" style="left:553px;top:368px;width:42px;height:3px;background:#35607d"></div>
<!-- top fields -->
<div class="t r" style="left:540px;top:391px;width:113px;font-size:13.6px;color:#333">Init Quantity</div>
<div class="t r" style="left:540px;top:414px;width:113px;font-size:13.6px;color:#333">End Quantity</div>
<div class="a" style="left:658px;top:390px;width:108px;height:24px;background:#fff;border:1px solid #c9ced8"></div>
<div class="a" style="left:658px;top:413px;width:108px;height:23px;background:#eff0f3;border:1px solid #c9ced8"></div>
<div class="t r" style="left:658px;top:391px;width:100px;font-size:13.6px;color:#333">400.000</div>
<div class="t r" style="left:658px;top:414px;width:100px;font-size:13.6px;color:#333">317.766</div>
<div class="t r" style="left:720px;top:391px;width:113px;font-size:13.6px;color:#333">Init Price</div>
<div class="t r" style="left:720px;top:414px;width:113px;font-size:13.6px;color:#333">End Price</div>
<div class="a" style="left:838px;top:390px;width:107px;height:24px;background:#fff;border:1px solid #c9ced8"></div>
<div class="a" style="left:838px;top:413px;width:107px;height:23px;background:#eff0f3;border:1px solid #c9ced8"></div>
<div class="t r" style="left:838px;top:391px;width:100px;font-size:13.6px;color:#333">0.00</div>
<div class="t r" style="left:838px;top:414px;width:100px;font-size:13.6px;color:#333">0.00</div>
<div class="t" style="left:966px;top:391px;font-size:13.6px;color:#333">Calc Method</div>
<div class="a" style="left:1048px;top:390px;width:123px;height:24px;background:#fff;border:1px solid #c9ced8"></div>
<div class="t" style="left:1057px;top:391px;font-size:13.6px;color:#333">FIFO</div>
<div class="t" style="left:1204px;top:391px;font-size:13.6px;color:#333">Total Cons</div>
<div class="a" style="left:1273px;top:390px;width:108px;height:24px;background:#eff0f3;border:1px solid #c9ced8"></div>
<div class="t r" style="left:1273px;top:391px;width:100px;font-size:13.6px;color:#333">82.234</div>
<div class="a" style="left:964px;top:419px;width:16px;height:16px;border:1px solid #555;border-radius:3px;background:#fff"></div>
<div class="t" style="left:984px;top:416px;font-size:13.6px;color:#333">Transfer Received When Fixing</div>
<!-- green highlight -->
<div class="a" style="left:561px;top:378px;width:221px;height:37px;border:3px solid #17a88a;box-shadow:0 2px 4px rgba(0,0,0,0.35)"></div>
<!-- grid -->
<div class="a" style="left:553px;top:458px;width:866px;height:338px;border:1px solid #c4cad6"></div>
<div class="a" style="left:554px;top:459px;width:840px;height:21px;background:#e6e7ee;border-bottom:1px solid #c4cad6"></div>
<div class="a" style="left:734px;top:459px;width:1px;height:20px;background:#c9cdd8"></div>
<div class="a" style="left:764px;top:459px;width:1px;height:20px;background:#c9cdd8"></div>
<div class="a" style="left:869px;top:459px;width:1px;height:20px;background:#c9cdd8"></div>
<div class="a" style="left:974px;top:459px;width:1px;height:20px;background:#c9cdd8"></div>
<div class="a" style="left:1079px;top:459px;width:1px;height:20px;background:#c9cdd8"></div>
<div class="a" style="left:1184px;top:459px;width:1px;height:20px;background:#c9cdd8"></div>
<div class="a" style="left:1289px;top:459px;width:1px;height:20px;background:#c9cdd8"></div>
<div class="t" style="left:561px;top:459px;font-size:13.6px;color:#555">Port Name</div>
<div class="t" style="left:739px;top:459px;font-size:13.6px;color:#555">F</div>
<div class="t r" style="left:764px;top:459px;width:96px;font-size:13.6px;color:#555">Sea Cons</div>
<div class="t r" style="left:869px;top:459px;width:96px;font-size:13.6px;color:#555">ROB Arr</div>
<div class="t r" style="left:974px;top:459px;width:96px;font-size:13.6px;color:#555">Port Cons</div>
<div class="t r" style="left:1079px;top:459px;width:96px;font-size:13.6px;color:#555">Receive</div>
<div class="t r" style="left:1184px;top:459px;width:96px;font-size:13.6px;color:#555">Price</div>
<div class="t r" style="left:1289px;top:459px;width:96px;font-size:13.6px;color:#555">ROB Dpt</div>
<div class="a" style="left:554px;top:503px;width:840px;height:22px;background:#e8eef1"></div>
<div class="t" style="left:559px;top:482px;font-size:13.6px;color:#222">AABENRAA</div>
<div class="t" style="left:738px;top:482px;font-size:13.6px;color:#222">C</div>
<div class="t r" style="left:764px;top:482px;width:97px;font-size:13.6px;color:#222">0.000</div>
<div class="t r" style="left:869px;top:482px;width:97px;font-size:13.6px;color:#222">0.000</div>
<div class="t r" style="left:974px;top:482px;width:97px;font-size:13.6px;color:#222">0.00</div>
<div class="t r" style="left:1289px;top:482px;width:97px;font-size:13.6px;color:#222">400.000</div>
<div class="t" style="left:559px;top:505px;font-size:13.6px;color:#222">ENGLISH CHANNEL</div>
<div class="t" style="left:738px;top:505px;font-size:13.6px;color:#222">P</div>
<div class="t r" style="left:764px;top:505px;width:97px;font-size:13.6px;color:#222">0.000</div>
<div class="t r" style="left:869px;top:505px;width:97px;font-size:13.6px;color:#222">0.000</div>
<div class="t r" style="left:974px;top:505px;width:97px;font-size:13.6px;color:#222">0.00</div>
<div class="t r" style="left:1289px;top:505px;width:97px;font-size:13.6px;color:#222">0.000</div>
<div class="t" style="left:559px;top:527px;font-size:13.6px;color:#222">MOROCCO (COUNTRY)</div>
<div class="t r" style="left:764px;top:527px;width:97px;font-size:13.6px;color:#222">82.234</div>
<div class="t r" style="left:869px;top:527px;width:97px;font-size:13.6px;color:#222">317.766</div>
<div class="t r" style="left:974px;top:527px;width:97px;font-size:13.6px;color:#222">0.00</div>
<div class="t r" style="left:1289px;top:527px;width:97px;font-size:13.6px;color:#222">317.766</div>
<!-- totals -->
<div class="t r" style="left:650px;top:796px;width:108px;font-size:13.6px;color:#333">Totals</div>
<div class="a" style="left:763px;top:795px;width:108px;height:24px;background:#eff0f3;border:1px solid #c9ced8"></div>
<div class="t r" style="left:763px;top:796px;width:99px;font-size:13.6px;color:#333">82.234</div>
<div class="a" style="left:973px;top:795px;width:106px;height:24px;background:#eff0f3;border:1px solid #c9ced8"></div>
<div class="a" style="left:1078px;top:795px;width:108px;height:24px;background:#eff0f3;border:1px solid #c9ced8"></div>
<div class="t r" style="left:973px;top:796px;width:99px;font-size:13.6px;color:#333">0.000</div>
<div class="t r" style="left:1078px;top:796px;width:99px;font-size:13.6px;color:#333">0.000</div>
<div class="a" style="left:1204px;top:801px;width:16px;height:16px;border:1px solid #555;border-radius:3px;background:#fff"></div>
<div class="t" style="left:1224px;top:798px;font-size:13.6px;color:#333">Disable Backup Fuels</div>
<div class="t" style="left:1198px;top:819px;font-size:13.6px;color:#333">Fuel Zone Set</div>
<div class="a" style="left:1288px;top:818px;width:123px;height:23px;background:#fff;border:1px solid #c9ced8"></div>
<div class="t" style="left:1297px;top:819px;font-size:13.6px;color:#333">Global Default</div>
<div class="a" style="left:559px;top:846px;width:16px;height:16px;border:1px solid #555;border-radius:3px;background:#fff"></div>
<div class="t" style="left:579px;top:843px;font-size:13.6px;color:#333">Optimize Liftings for Cargo:</div>
<div class="a" style="left:763px;top:840px;width:153px;height:24px;background:#eff0f3;border:1px solid #c9ced8"></div>
<div class="a" style="left:559px;top:869px;width:16px;height:16px;border:1px solid #555;border-radius:3px;background:#fff"></div>
<div class="t" style="left:579px;top:866px;font-size:13.6px;color:#333">Use Scrubber</div>
<!-- page scrollbars -->
<div class="a" style="left:1894px;top:0;width:21px;height:970px;background:#f0f0f0;border-left:1px solid #fff"></div>
<div class="a" style="left:1895px;top:21px;width:19px;height:833px;background:#cdcdcd"></div>
<svg style="left:1899px;top:7px" width="11" height="7" viewBox="0 0 11 7"><path d="M1 6L5.5 1.5L10 6" fill="none" stroke="#505050" stroke-width="1.9"/></svg>
<svg style="left:1899px;top:956px" width="11" height="7" viewBox="0 0 11 7"><path d="M1 1L5.5 5.5L10 1" fill="none" stroke="#505050" stroke-width="1.9"/></svg>
<div class="a" style="left:0;top:970px;width:1894px;height:21px;background:#f0f0f0;border-top:1px solid #fff"></div>
<div class="a" style="left:1894px;top:970px;width:21px;height:21px;background:#f0f0f0"></div>
<div class="a" style="left:21px;top:971px;width:1827px;height:19px;background:#cdcdcd"></div>
<svg style="left:6px;top:976px" width="7" height="11" viewBox="0 0 7 11"><path d="M6 1L1.5 5.5L6 10" fill="none" stroke="#505050" stroke-width="1.9"/></svg>
<svg style="left:1880px;top:976px" width="7" height="11" viewBox="0 0 7 11"><path d="M1 1L5.5 5.5L1 10" fill="none" stroke="#505050" stroke-width="1.9"/></svg>
<svg style="left:1901px;top:978px" width="12" height="12" viewBox="0 0 12 12" fill="#b4b4b4"><rect x="8" y="0" width="3" height="3"/><rect x="4" y="4" width="3" height="3"/><rect x="8" y="4" width="3" height="3"/><rect x="0" y="8" width="3" height="3"/><rect x="4" y="8" width="3" height="3"/><rect x="8" y="8" width="3" height="3"/></svg>
</body></html>
